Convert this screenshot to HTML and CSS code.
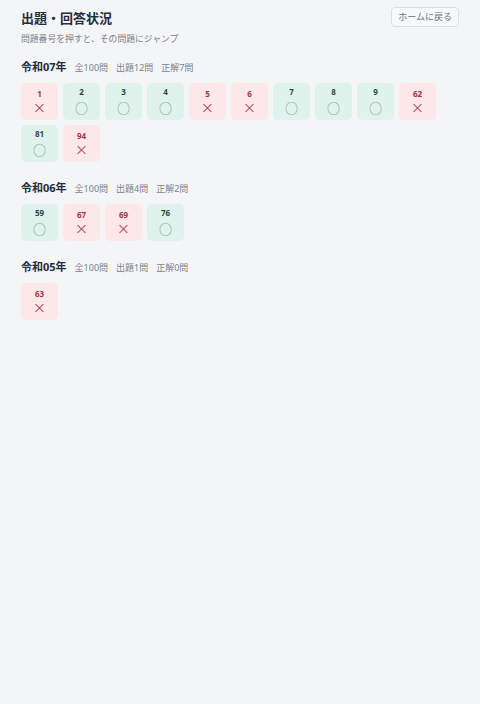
FILE: index.html
```html
<!DOCTYPE html>
<html lang="ja">
<head>
<meta charset="utf-8">
<link rel="stylesheet" href="styles.css">
</head>
<body>
<div class="page">
  <header class="head">
    <div class="titles">
      <h1 class="title">出題・回答状況</h1>
      <p class="sub">問題番号を押すと、その問題にジャンプ</p>
    </div>
    <button class="home">ホームに戻る</button>
  </header>

  <section class="year">
    <div class="year-head"><span class="yname">令和07年</span><span class="meta">全100問</span><span class="meta">出題12問</span><span class="meta">正解7問</span></div>
    <div class="grid">
      <div class="tile ng"><span class="num">1</span><span class="mark">×</span></div>
      <div class="tile ok"><span class="num">2</span><span class="mark">○</span></div>
      <div class="tile ok"><span class="num">3</span><span class="mark">○</span></div>
      <div class="tile ok"><span class="num">4</span><span class="mark">○</span></div>
      <div class="tile ng"><span class="num">5</span><span class="mark">×</span></div>
      <div class="tile ng"><span class="num">6</span><span class="mark">×</span></div>
      <div class="tile ok"><span class="num">7</span><span class="mark">○</span></div>
      <div class="tile ok"><span class="num">8</span><span class="mark">○</span></div>
      <div class="tile ok"><span class="num">9</span><span class="mark">○</span></div>
      <div class="tile ng"><span class="num">62</span><span class="mark">×</span></div>
      <div class="tile ok"><span class="num">81</span><span class="mark">○</span></div>
      <div class="tile ng"><span class="num">94</span><span class="mark">×</span></div>
    </div>
  </section>

  <section class="year">
    <div class="year-head"><span class="yname">令和06年</span><span class="meta">全100問</span><span class="meta">出題4問</span><span class="meta">正解2問</span></div>
    <div class="grid">
      <div class="tile ok"><span class="num">59</span><span class="mark">○</span></div>
      <div class="tile ng"><span class="num">67</span><span class="mark">×</span></div>
      <div class="tile ng"><span class="num">69</span><span class="mark">×</span></div>
      <div class="tile ok"><span class="num">76</span><span class="mark">○</span></div>
    </div>
  </section>

  <section class="year">
    <div class="year-head"><span class="yname">令和05年</span><span class="meta">全100問</span><span class="meta">出題1問</span><span class="meta">正解0問</span></div>
    <div class="grid">
      <div class="tile ng"><span class="num">63</span><span class="mark">×</span></div>
    </div>
  </section>
</div>
</body>
</html>
```

FILE: styles.css
```css
html, body {
  margin: 0;
  padding: 0;
  background: #f4f5f7;
}
body {
  font-family: "Noto Sans", "Noto Sans CJK JP", sans-serif;
  color: #1f2d3d;
}
.page {
  padding: 7px 21px 20px 21px;
}
.head {
  display: flex;
  justify-content: space-between;
  align-items: flex-start;
}
.titles {
  padding-top: 2px;
}
.title {
  margin: 0;
  font-size: 13px;
  font-weight: 700;
  line-height: 18px;
  color: #1f2d3d;
}
.sub {
  margin: 5px 0 0 0;
  font-size: 8.8px;
  line-height: 14px;
  color: #7b838c;
}
.home {
  font-family: "Noto Sans CJK JP", sans-serif;
  font-size: 9px;
  color: #6b737c;
  background: #f7f8fa;
  border: 1px solid #dcdfe3;
  border-radius: 4px;
  height: 20px;
  padding: 0 6px;
  line-height: 18px;
}
.year {
  margin-top: 13px;
}
.year + .year {
  margin-top: 18px;
}
.year-head {
  display: flex;
  align-items: baseline;
  gap: 8px;
  margin-bottom: 8px;
  height: 16px;
  line-height: 16px;
}
.yname {
  font-size: 11px;
  font-weight: 700;
  color: #1f2d3d;
}
.meta {
  font-size: 9px;
  color: #7b838c;
}
.grid {
  display: grid;
  grid-template-columns: repeat(10, 37px);
  gap: 5px;
}
.tile {
  height: 37px;
  border-radius: 5px;
  display: flex;
  flex-direction: column;
  align-items: center;
  box-sizing: border-box;
  padding-top: 4px;
}
.tile.ok { background: #dff3ec; }
.tile.ng { background: #fde7e8; padding-top: 6px; }
.num {
  display: block;
  font-size: 8px;
  font-weight: 700;
  line-height: 10px;
  height: 10px;
}
.ok .num { color: #1f4d3d; }
.ng .num { color: #a23647; }
.mark {
  display: block;
  height: 14px;
  line-height: 14px;
  margin-top: 4px;
}
.ok .mark {
  color: #7d9990;
  font-family: "Noto Sans CJK JP", sans-serif;
  font-size: 13px;
}
.ng .mark {
  color: #a8344a;
  margin-top: 2px;
  font-family: "DejaVu Sans", sans-serif;
  font-size: 16px;
  font-weight: 300;
}
```
